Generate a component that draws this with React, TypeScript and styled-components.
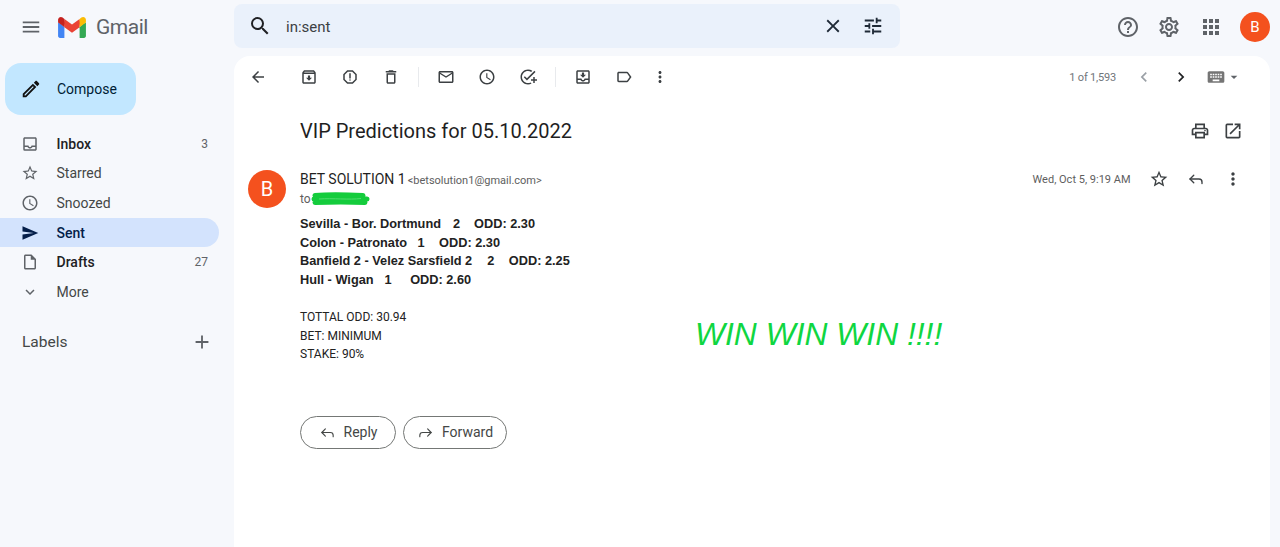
import React from 'react'
import styled, { createGlobalStyle } from 'styled-components'
import {
  MdMenu, MdSearch, MdClose, MdTune, MdHelpOutline, MdOutlineSettings, MdApps,
  MdOutlineCreate, MdOutlineInbox, MdStarBorder, MdOutlineWatchLater, MdSend,
  MdOutlineInsertDriveFile, MdExpandMore, MdAdd, MdArrowBack, MdOutlineArchive,
  MdOutlineReport, MdOutlineDelete, MdMailOutline, MdOutlineAddTask, MdOutlineMoveToInbox,
  MdOutlineLabel, MdMoreVert, MdChevronLeft, MdChevronRight, MdKeyboard, MdArrowDropDown,
  MdOutlinePrint, MdOpenInNew,
} from 'react-icons/md'
import { Reply, Forward } from 'lucide-react'

const GlobalStyle = createGlobalStyle`
  html, body { margin: 0; padding: 0; height: 100%; overflow: hidden; background: #f6f8fc; }
  body { font-family: Roboto, "Liberation Sans", sans-serif; color: #202124; }
`

const Shell = styled.div`
  display: grid;
  grid-template-columns: 234px 1fr;
  grid-template-rows: 56px 1fr;
  height: 547px;
  width: 1280px;
  background: #f6f8fc;
`

const Brand = styled.div`
  display: flex;
  align-items: center;
  padding-left: 20px;
  height: 54px;
  color: #5f6368;
`

const BrandName = styled.span`
  margin-left: 10px;
  font-size: 21px;
  letter-spacing: -0.5px;
  color: #5f6368;
`

const LogoMark = styled.svg`
  width: 28px;
  height: 21px;
  margin-left: 16px;
`

const TopBar = styled.header`
  display: flex;
  align-items: flex-start;
  justify-content: space-between;
  padding: 4px 10px 0 0;
`

const SearchBox = styled.div`
  width: 666px;
  height: 44px;
  border-radius: 8px;
  background: #eaf1fb;
  display: flex;
  align-items: center;
  padding: 0 16px 0 14px;
  box-sizing: border-box;
  color: #202124;
`

const SearchText = styled.span`
  flex: 1;
  margin-left: 14px;
  padding-top: 2px;
  font-size: 15px;
  color: #3c4043;
`

const SearchAction = styled.span`
  display: flex;
  margin-left: 18px;
  color: #1f2a37;
`

const TopActions = styled.div`
  display: flex;
  align-items: center;
  height: 46px;
  gap: 17.5px;
  color: #5f6368;
`

const Avatar = styled.div<{ $size: number; $font: number }>`
  width: ${p => p.$size}px;
  height: ${p => p.$size}px;
  border-radius: 50%;
  background: #f4511e;
  color: #fff;
  display: flex;
  align-items: center;
  justify-content: center;
  font-size: ${p => p.$font}px;
  flex: none;
`

const MessageAvatar = styled(Avatar)`
  margin-top: 10px;
`

const Sidebar = styled.nav`
  padding: 7px 0 0 0;
`

const Compose = styled.button`
  margin-left: 5px;
  width: 131px;
  height: 52px;
  border: 0;
  border-radius: 16px;
  background: #c2e7ff;
  color: #001d35;
  display: flex;
  align-items: center;
  padding: 0 0 0 15px;
  gap: 15px;
  font: 400 14px Roboto, sans-serif;
`

const NavList = styled.ul`
  list-style: none;
  margin: 14px 0 0;
  padding: 0;
  width: 219px;
`

const NavRow = styled.li<{ $active?: boolean; $bold?: boolean }>`
  height: 29.6px;
  display: flex;
  align-items: center;
  padding: 0 11px 0 21px;
  box-sizing: border-box;
  border-radius: 0 15px 15px 0;
  font-size: 14px;
  gap: 17.5px;
  background: ${p => (p.$active ? '#d3e3fd' : 'transparent')};
  color: ${p => (p.$active ? '#041e49' : p.$bold ? '#202124' : '#444746')};
  font-weight: ${p => (p.$active || p.$bold ? 500 : 400)};
  svg { color: ${p => (p.$active ? '#041e49' : '#5f6368')}; flex: none; }
`

const NavLabel = styled.span`
  flex: 1;
`

const NavCount = styled.span`
  font-size: 12px;
  font-weight: 400;
  color: #5f6368;
`

const LabelsHead = styled.div`
  display: flex;
  align-items: center;
  justify-content: space-between;
  width: 219px;
  box-sizing: border-box;
  padding: 0 6px 0 22px;
  margin-top: 20px;
  height: 30px;
  font-size: 15.5px;
  color: #444746;
  svg { color: #5f6368; }
`

const Panel = styled.main`
  position: relative;
  margin-right: 10px;
  background: #fff;
  border-radius: 16px 16px 0 0;
  display: flex;
  flex-direction: column;
`

const Toolbar = styled.div`
  display: flex;
  align-items: center;
  height: 42px;
  padding: 0 0 0 3.5px;
  color: #3c4043;
`

const ToolButton = styled.span<{ $w?: number }>`
  width: ${p => p.$w ?? 41}px;
  display: flex;
  align-items: center;
  justify-content: center;
  flex: none;
`

const ToolGap = styled.span<{ $w: number }>`
  width: ${p => p.$w}px;
  flex: none;
`

const ToolSep = styled.span`
  width: 1px;
  height: 20px;
  background: #e8eaed;
  margin: 0 6.5px;
  flex: none;
`

const Pager = styled.div`
  margin-left: auto;
  display: flex;
  align-items: center;
  padding-right: 28px;
  font-size: 11px;
  letter-spacing: -0.2px;
  color: #70757a;
`

const PagerCount = styled.span`
  margin-right: 9.5px;
`

const KeyboardKey = styled(MdKeyboard)`
  margin-left: 6.5px;
  color: #757575;
`

const SubjectRow = styled.div`
  display: flex;
  align-items: center;
  padding: 16px 27px 0 66px;
  height: 34px;
`

const Subject = styled.h1`
  flex: 1;
  margin: 0;
  font-size: 20px;
  font-weight: 400;
  color: #1f1f1f;
`

const SubjectTools = styled.div`
  display: flex;
  gap: 13px;
  color: #3c4043;
`

const Message = styled.article`
  display: flex;
  align-items: flex-start;
  padding: 12px 0 0 14px;
`

const MessageMain = styled.div`
  flex: 1;
  margin-left: 14px;
  padding-top: 9px;
`

const MetaRow = styled.div`
  display: flex;
  align-items: flex-start;
`

const Identity = styled.div`
  flex: 1;
`

const Sender = styled.div`
  padding-top: 1px;
  font-size: 14px;
  line-height: 18px;
  color: #1f1f1f;
`

const SenderMail = styled.span`
  font-size: 11px;
  color: #5e5e5e;
  margin-left: 2px;
`

const Recipient = styled.div`
  display: flex;
  align-items: center;
  font-size: 12px;
  height: 18px;
  color: #5e5e5e;
`

const Meta = styled.div`
  display: flex;
  align-items: center;
  height: 20px;
  padding-right: 19px;
  font-size: 11px;
  color: #5e5e5e;
  svg { color: #3c4043; }
`

const MetaDate = styled.span`
  margin-right: 9.5px;
`

const MetaIcon = styled.span`
  width: 37px;
  display: flex;
  justify-content: center;
`

const Body = styled.div`
  margin-top: 7px;
  line-height: 18.7px;
  color: #222;
`

const BetLine = styled.div`
  display: flex;
  font-family: "Liberation Sans", Arial, sans-serif;
  font-size: 12.75px;
  font-weight: 700;
  white-space: pre;
`

const BetPart = styled.span<{ $gap?: number }>`
  margin-left: ${p => p.$gap ?? 0}px;
`

const BodyPlain = styled.div`
  margin-top: 18px;
  font-size: 12px;
`

const Actions = styled.div`
  display: flex;
  gap: 7px;
  margin-top: 52px;
`

const ActionButton = styled.button<{ $w: number }>`
  width: ${p => p.$w}px;
  height: 33px;
  box-sizing: border-box;
  border: 1px solid #747775;
  border-radius: 17px;
  background: #fff;
  color: #444746;
  font: 400 14px Roboto, sans-serif;
  display: flex;
  align-items: center;
  justify-content: center;
  gap: 8px;
  padding: 0;
`

const WinStamp = styled.div`
  position: absolute;
  left: 461px;
  top: 258px;
  font-family: "Liberation Sans", Arial, sans-serif;
  font-style: italic;
  font-size: 31.8px;
  line-height: 40px;
  color: #0fd641;
`

const Gmail = () => (
  <LogoMark viewBox="0 0 256 193" aria-hidden="true">
    <path fill="#4285F4" d="M58.182 192.05V93.14L27.507 65.077 0 49.504v125.091c0 9.658 7.825 17.455 17.455 17.455h40.727Z" />
    <path fill="#34A853" d="M197.818 192.05h40.727c9.659 0 17.455-7.826 17.455-17.455V49.505l-31.156 17.837-27.026 25.798v98.91Z" />
    <path fill="#EA4335" d="m58.182 93.14-4.174-38.647 4.174-36.989L128 69.868l69.818-52.364 4.67 34.992-4.67 40.644L128 145.504z" />
    <path fill="#FBBC04" d="M197.818 17.504V93.14L256 49.504V26.231c0-21.585-24.64-33.89-41.89-20.945l-16.292 12.218Z" />
    <path fill="#C5221F" d="m0 49.504 26.759 20.07L58.182 93.14V17.504L41.89 5.286C24.61-7.66 0 4.646 0 26.23v23.273Z" />
  </LogoMark>
)

// the address is scribbled over in the picture
const Scribble = () => (
  <svg width="59" height="14" viewBox="0 0 59 14" aria-hidden="true">
    <path d="M4 3.5 C14 2.5 34 2.5 52 3.5 M3 7 C20 6 40 6 56 7 M4 10.5 C20 10 40 10 54 10.5" fill="none" stroke="#14cc3c" strokeWidth="5" strokeLinecap="round" />
    <path d="M8 7 C22 6 38 8 50 6.5" fill="none" stroke="#4fdc6e" strokeWidth="1" />
  </svg>
)

const navItems = [
  { label: 'Inbox', icon: MdOutlineInbox, count: '3', bold: true },
  { label: 'Starred', icon: MdStarBorder },
  { label: 'Snoozed', icon: MdOutlineWatchLater },
  { label: 'Sent', icon: MdSend, active: true },
  { label: 'Drafts', icon: MdOutlineInsertDriveFile, count: '27', bold: true },
  { label: 'More', icon: MdExpandMore },
]

const bets = [
  { team: 'Sevilla - Bor. Dortmund', pick: '2', odd: 'ODD: 2.30', a: 12, b: 14 },
  { team: 'Colon - Patronato', pick: '1', odd: 'ODD: 2.30', a: 10.5, b: 14.5 },
  { team: 'Banfield 2 - Velez Sarsfield 2', pick: '2', odd: 'ODD: 2.25', a: 15, b: 14.5 },
  { team: 'Hull - Wigan', pick: '1', odd: 'ODD: 2.60', a: 11, b: 18.5 },
]

export default function App() {
  return (
    <Shell>
      <GlobalStyle />
      <Brand>
        <MdMenu size={22} />
        <Gmail />
        <BrandName>Gmail</BrandName>
      </Brand>
      <TopBar>
        <SearchBox>
          <MdSearch size={24} />
          <SearchText>in:sent</SearchText>
          <SearchAction><MdClose size={22} /></SearchAction>
          <SearchAction><MdTune size={22} /></SearchAction>
        </SearchBox>
        <TopActions>
          <MdHelpOutline size={24} />
          <MdOutlineSettings size={24} />
          <MdApps size={24} />
          <Avatar $size={30} $font={15}>B</Avatar>
        </TopActions>
      </TopBar>
      <Sidebar>
        <Compose><MdOutlineCreate size={22} color="#111" />Compose</Compose>
        <NavList>
          {navItems.map(item => (
            <NavRow key={item.label} $active={item.active} $bold={item.bold}>
              <item.icon size={18} />
              <NavLabel>{item.label}</NavLabel>
              {item.count && <NavCount>{item.count}</NavCount>}
            </NavRow>
          ))}
        </NavList>
        <LabelsHead>Labels<MdAdd size={22} /></LabelsHead>
      </Sidebar>
      <Panel>
        <Toolbar>
          <ToolButton><MdArrowBack size={18} /></ToolButton>
          <ToolGap $w={10} />
          <ToolButton><MdOutlineArchive size={18} /></ToolButton>
          <ToolButton><MdOutlineReport size={18} /></ToolButton>
          <ToolButton><MdOutlineDelete size={18} /></ToolButton>
          <ToolSep />
          <ToolButton><MdMailOutline size={18} /></ToolButton>
          <ToolButton><MdOutlineWatchLater size={18} /></ToolButton>
          <ToolButton><MdOutlineAddTask size={18} /></ToolButton>
          <ToolSep />
          <ToolButton><MdOutlineMoveToInbox size={18} /></ToolButton>
          <ToolButton><MdOutlineLabel size={18} /></ToolButton>
          <ToolButton $w={31}><MdMoreVert size={18} /></ToolButton>
          <Pager>
            <PagerCount>1 of 1,593</PagerCount>
            <ToolButton $w={37}><MdChevronLeft size={20} color="#9aa0a6" /></ToolButton>
            <ToolButton $w={37}><MdChevronRight size={20} color="#202124" /></ToolButton>
            <KeyboardKey size={20} />
            <MdArrowDropDown size={16} color="#5f6368" />
          </Pager>
        </Toolbar>
        <SubjectRow>
          <Subject>VIP Predictions for 05.10.2022</Subject>
          <SubjectTools>
            <MdOutlinePrint size={20} />
            <MdOpenInNew size={20} />
          </SubjectTools>
        </SubjectRow>
        <Message>
          <MessageAvatar $size={38} $font={20}>B</MessageAvatar>
          <MessageMain>
            <MetaRow>
              <Identity>
                <Sender>BET SOLUTION 1<SenderMail>&lt;betsolution1@gmail.com&gt;</SenderMail></Sender>
                <Recipient>to<Scribble /></Recipient>
              </Identity>
              <Meta>
                <MetaDate>Wed, Oct 5, 9:19 AM</MetaDate>
                <MetaIcon><MdStarBorder size={20} /></MetaIcon>
                <MetaIcon><Reply size={18} strokeWidth={1.8} /></MetaIcon>
                <MetaIcon><MdMoreVert size={20} /></MetaIcon>
              </Meta>
            </MetaRow>
            <Body>
              {bets.map(bet => (
                <BetLine key={bet.team}>
                  <BetPart>{bet.team}</BetPart>
                  <BetPart $gap={bet.a}>{bet.pick}</BetPart>
                  <BetPart $gap={bet.b}>{bet.odd}</BetPart>
                </BetLine>
              ))}
              <BodyPlain>
                <div>TOTTAL ODD: 30.94</div>
                <div>BET: MINIMUM</div>
                <div>STAKE: 90%</div>
              </BodyPlain>
            </Body>
            <Actions>
              <ActionButton $w={96}><Reply size={17} strokeWidth={1.6} />Reply</ActionButton>
              <ActionButton $w={104}><Forward size={17} strokeWidth={1.6} />Forward</ActionButton>
            </Actions>
          </MessageMain>
        </Message>
        <WinStamp>WIN WIN WIN !!!!</WinStamp>
      </Panel>
    </Shell>
  )
}
